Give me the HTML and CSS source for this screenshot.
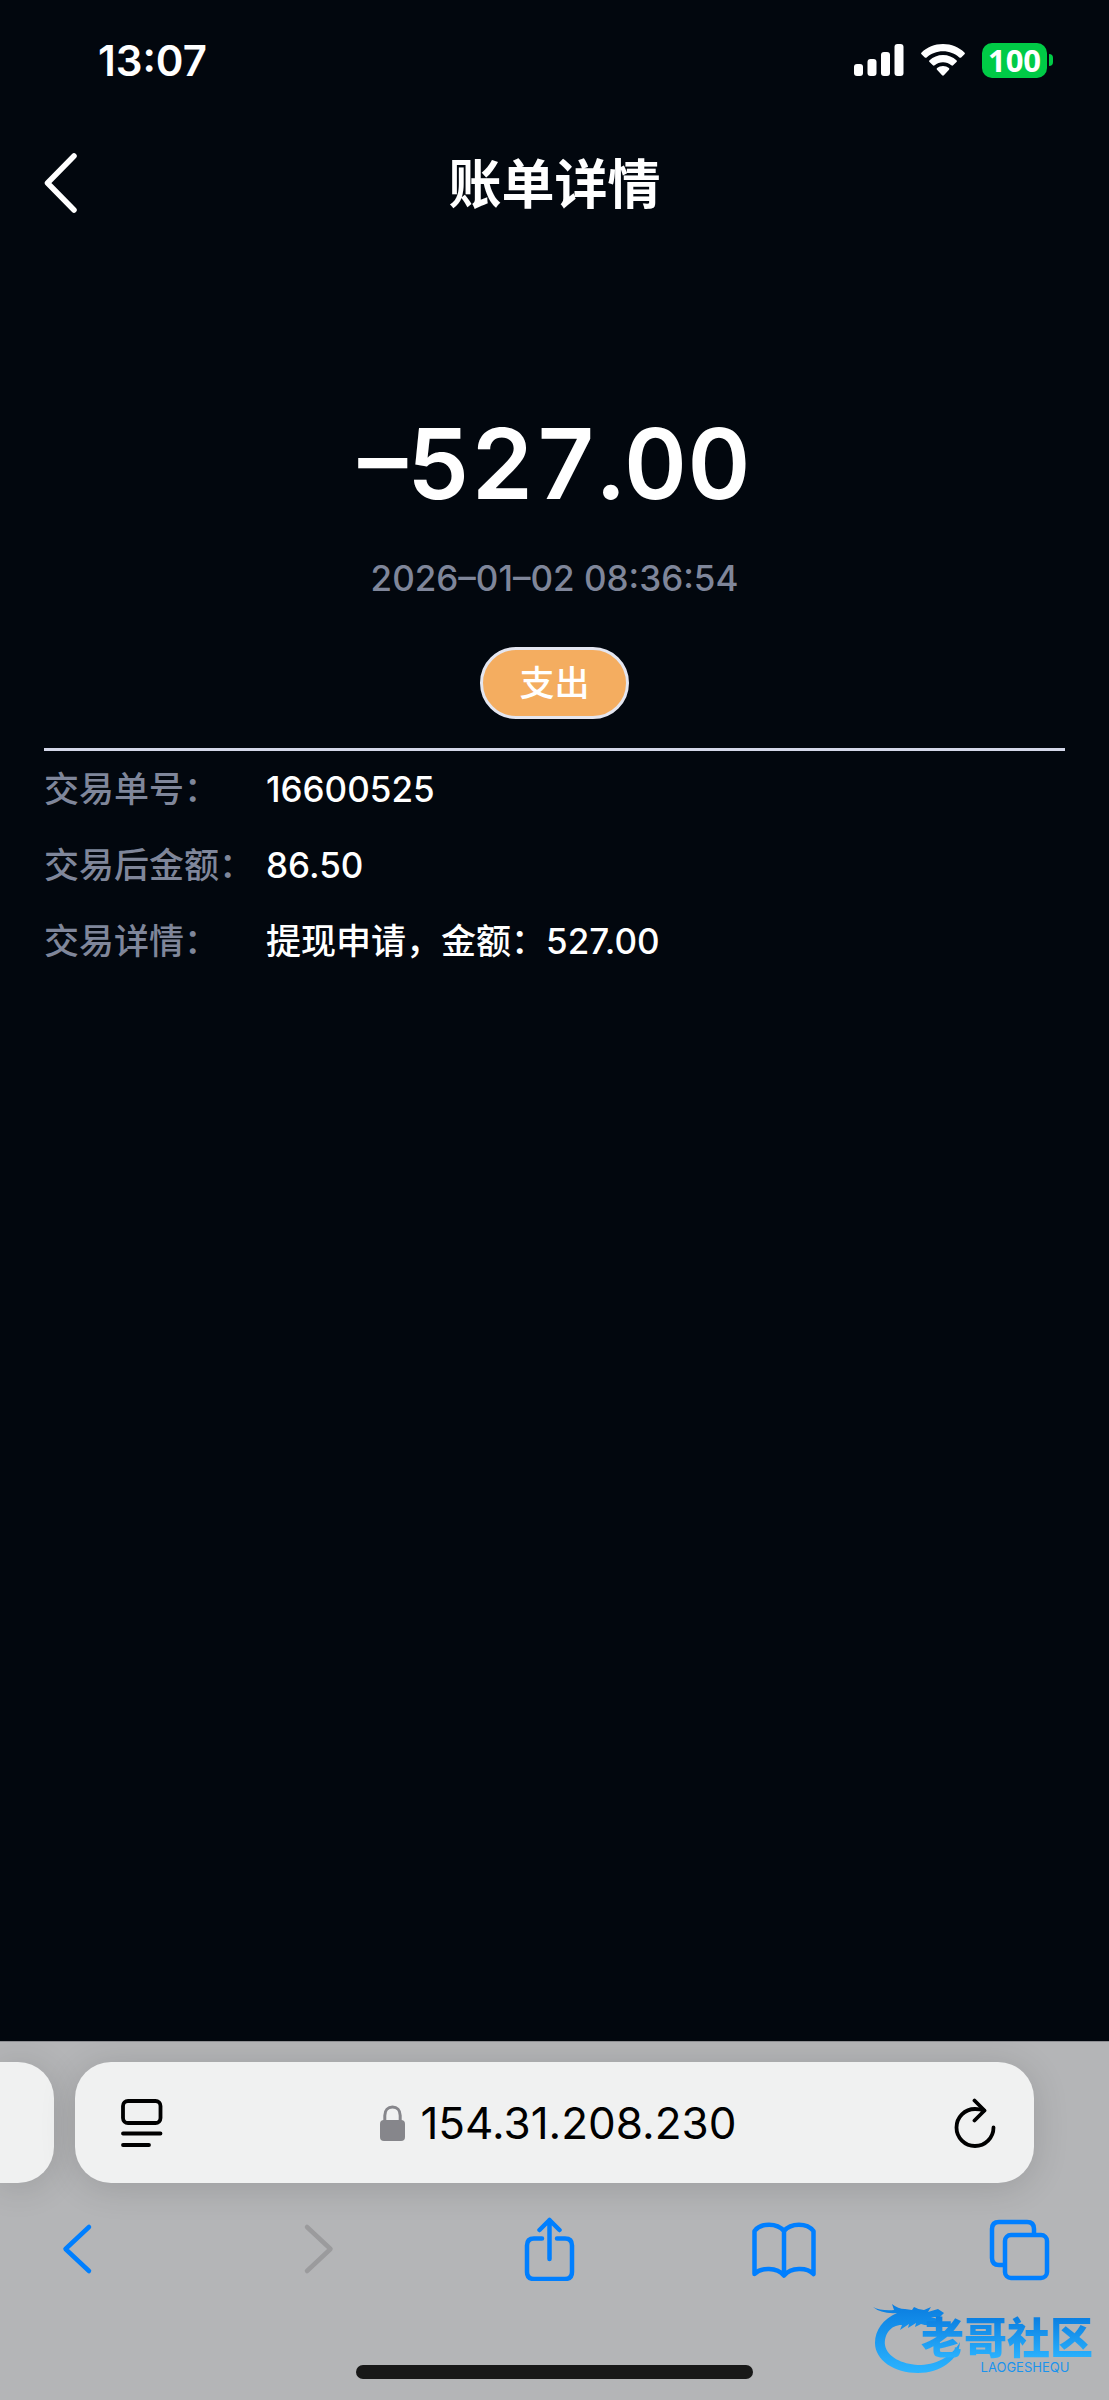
FILE: index.html
```html
<!DOCTYPE html>
<html lang="zh-CN">
<head>
    <meta charset="UTF-8">
    <meta name="viewport" content="width=device-width, initial-scale=1.0">
    <title>账单详情</title>
    <link rel="stylesheet" href="styles.css">
</head>
<body>
    <!-- Status bar -->
    <div class="status-bar">
        <span class="time">13:07</span>
        <div class="status-icons">
            <svg class="signal" width="50" height="32" viewBox="0 0 50 32" fill="#fff">
                <rect x="0" y="20" width="9" height="12" rx="3"/>
                <rect x="13.5" y="15" width="9" height="17" rx="3"/>
                <rect x="27" y="8" width="9" height="24" rx="3"/>
                <rect x="40.5" y="0" width="9" height="32" rx="3"/>
            </svg>
            <svg class="wifi" width="44" height="32" viewBox="0 0 44 32" fill="#fff">
                <path d="M22 0C13.5 0 6 3.3.6 8.4c-.7.7-.7 1.2-.1 1.8l3.3 3.2c.6.6 1.2.6 1.9 0C10 9.5 15.7 7.2 22 7.2s12 2.3 16.3 6.2c.7.6 1.3.6 1.9 0l3.3-3.2c.6-.6.6-1.1-.1-1.8C38 3.3 30.5 0 22 0z"/>
                <path d="M22 11c-5.2 0-9.900 2-13.400 5.200-.7.6-.7 1.2-.1 1.800l3.400 3.300c.6.6 1.100.5 1.800 0 2.300-1.900 5.100-3.100 8.300-3.100s6 1.200 8.300 3.100c.7.5 1.200.6 1.800 0l3.400-3.300c.6-.6.6-1.200-.1-1.800C31.900 13 27.200 11 22 11z"/>
                <path d="M22 22c-2.3 0-4.3.8-5.900 2.100-.6.5-.6 1.1-.1 1.600l5.100 5.500c.6.6 1.200.6 1.800 0l5.100-5.500c.5-.5.5-1.100-.1-1.600C26.300 22.8 24.300 22 22 22z"/>
            </svg>
            <div class="battery">
                <span class="battery-level">100</span>
                <span class="battery-cap"></span>
            </div>
        </div>
    </div>

    <!-- Page header -->
    <header class="header">
        <button type="button" class="back" aria-label="返回">
            <svg width="34" height="60" viewBox="0 0 34 60" fill="none" stroke="#fff" stroke-width="5.5" stroke-linecap="round" stroke-linejoin="round">
                <path d="M30 3L3.5 30 30 57"/>
            </svg>
        </button>
        <h1>账单详情</h1>
    </header>

    <!-- Bill -->
    <main class="bill">
        <section class="summary">
            <p class="amount">–527.00</p>
            <time class="date">2026–01–02 08:36:54</time>
            <span class="tag">支出</span>
        </section>
        <dl class="details">
            <div class="row">
                <dt>交易单号：</dt>
                <dd>16600525</dd>
            </div>
            <div class="row">
                <dt>交易后金额：</dt>
                <dd>86.50</dd>
            </div>
            <div class="row">
                <dt>交易详情：</dt>
                <dd>提现申请，金额：527.00</dd>
            </div>
        </dl>
    </main>

    <!-- Browser bar -->
    <footer class="browser">
        <div class="tabs">
            <div class="tab-prev"></div>
            <div class="address">
                <button type="button" aria-label="页面菜单">
                    <svg width="42" height="48" viewBox="0 0 42 48" fill="none" stroke="#000" stroke-width="3.8" stroke-linecap="round">
                        <rect x="2" y="2" width="37.5" height="22" rx="5"/>
                        <path d="M2 34.5h37.5M2 46h26"/>
                    </svg>
                </button>
                <label class="url">
                    <svg width="25" height="36" viewBox="0 0 25 36">
                        <path d="M4.8 17V10.5C4.8 5 8 2 12.5 2s7.7 3 7.7 8.5V17" fill="none" stroke="#86868b" stroke-width="3"/>
                        <rect x="0" y="15" width="25" height="21" rx="4" fill="#86868b"/>
                    </svg>
                    <input type="text" value="154.31.208.230" aria-label="网址">
                </label>
                <button type="button" aria-label="刷新">
                    <svg width="42" height="50" viewBox="0 0 42 50" fill="none" stroke="#000" stroke-width="3.8" stroke-linecap="round" stroke-linejoin="round">
                        <path d="M39.5 29.5A18.5 18.5 0 1 1 21 11c3.5 0 6 .3 9 1.500"/>
                        <path d="M20.5 2.5L30.5 12.5 20.5 22.5"/>
                    </svg>
                </button>
            </div>
        </div>
        <nav class="toolbar">
            <button type="button" aria-label="后退">
                <svg width="64" height="64" viewBox="0 0 64 64">
                    <path d="M44 10L20.5 32 44 54"/>
                </svg>
            </button>
            <button type="button" class="disabled" aria-label="前进" disabled>
                <svg width="64" height="64" viewBox="0 0 64 64">
                    <path d="M26 10L49.5 32 26 54"/>
                </svg>
            </button>
            <button type="button" aria-label="分享">
                <svg width="64" height="64" viewBox="0 0 64 64">
                    <path d="M26 21.5h-8q-7 0-7 7V55q0 7 7 7h31q7 0 7-7V28.5q0-7-7-7h-8"/>
                    <path d="M33.5 42V3M23.5 13L33.5 3 43.5 13"/>
                </svg>
            </button>
            <button type="button" aria-label="书签">
                <svg width="64" height="64" viewBox="0 0 64 64">
                    <path d="M32 14C25 5.5 9 5.5 2.5 14V57C9 50 25 50 32 58.5 39 50 55 50 61.5 57V14C55 5.5 39 5.5 32 14zM32 14V58"/>
                </svg>
            </button>
            <button type="button" aria-label="标签页">
                <svg width="64" height="64" viewBox="0 0 64 64">
                    <rect x="18" y="18" width="42" height="43" rx="6"/>
                    <path d="M17 48h-5q-7 0-7-7V12q0-7 7-7h28q7 0 7 7v5"/>
                </svg>
            </button>
        </nav>
        <div class="home-indicator"></div>

        <!-- Watermark -->
        <div class="watermark">
            <svg width="88" height="70" viewBox="0 0 88 70">
                <defs>
                    <linearGradient id="blue" x1="0" y1="0" x2="0" y2="1">
                        <stop offset="0" stop-color="#0a7de0"/>
                        <stop offset="1" stop-color="#2bb4ff"/>
                    </linearGradient>
                </defs>
                <path fill="url(#blue)" d="M0 3q8 4 21 3l-2-6q6 5 13 5l7 1 2-3q5 3 10 3l7-3-3 5 10-3 6 4-4 4-9 0 10 3-2 3-9-1 4 3q-8 1-13-1l-6 3 1-4-8 5 1-4-9 6 2-5C17 21 11 31 12 41c2 12 17 19 33 20 17 0 33-7 42-23C86 56 67 69 45 69 21 69 2 56 2 39 2 26 10 15 24 9Q8 10 0 3z"/>
            </svg>
            <div class="watermark-text">
                <strong>老哥社区</strong>
                <small>LAOGESHEQU</small>
            </div>
        </div>
    </footer>
</body>
</html>
```
FILE: styles.css
```css
/* Body Styling */
body {
    font-family: 'Inter', 'Noto Sans CJK SC', sans-serif;
    background: #02070e;
    color: #fff;
    margin: 0;
    min-height: 100vh;
    display: flex;
    flex-direction: column;
}

button {
    background: none;
    border: none;
    padding: 0;
    cursor: pointer;
}

svg {
    display: block;
}

/* Status Bar */
.status-bar {
    display: flex;
    justify-content: space-between;
    align-items: center;
    height: 120px;
    padding: 0 56px 0 98px;
}

.time {
    font-size: 42px;
    font-weight: 600;
}

.status-icons {
    display: flex;
    align-items: center;
    gap: 17px;
}

.battery {
    display: flex;
    align-items: center;
    gap: 2px;
}

.battery-level {
    background: #00cb46;
    border-radius: 10px;
    width: 65px;
    line-height: 35px;
    font-family: 'Open Sans', sans-serif;
    font-size: 31px;
    font-weight: 700;
    text-align: center;
}

.battery-cap {
    background: #00cb46;
    width: 4px;
    height: 12px;
    border-radius: 0 6px 6px 0;
}

/* Header */
.header {
    display: grid;
    grid-template-columns: 1fr auto 1fr;
    align-items: center;
    height: 126px;
    padding: 0 44px;
}

.back {
    justify-self: start;
}

h1 {
    margin: 0;
    padding-bottom: 4px;
    font-size: 53px;
    font-weight: 600;
}

/* Bill */
.bill {
    flex: 1;
    padding: 0 44px;
}

.summary {
    display: flex;
    flex-direction: column;
    align-items: center;
    padding: 158px 0 29px;
    border-bottom: 3px solid #d3d6e8;
}

.amount {
    margin: 0;
    font-size: 98px;
    line-height: 120px;
    font-weight: 600;
    font-variant-numeric: tabular-nums;
}

.date {
    margin-top: 32px;
    color: #7f869a;
    font-size: 35px;
    line-height: 44px;
    font-weight: 500;
}

.tag {
    margin-top: 47px;
    padding: 0 36px;
    background: #f4ad60;
    border: 3px solid #e4e6f0;
    border-radius: 36px;
    font-size: 35px;
    line-height: 66px;
    font-weight: 500;
}

.details {
    margin: 0;
}

.row {
    display: flex;
    font-size: 35px;
    line-height: 76px;
    font-weight: 500;
}

dt {
    width: 222px;
    color: #7f869a;
    white-space: nowrap;
}

dd {
    margin: 0;
}

/* Browser Bar */
.browser {
    position: relative;
    background: #b4b5b7;
    border-top: 1px solid #8d8e92;
    padding-bottom: 21px;
    overflow: hidden;
}

.tabs {
    display: flex;
    gap: 21px;
    padding: 20px 75px 0 0;
}

.tab-prev {
    width: 54px;
    border-radius: 0 36px 36px 0;
}

.tab-prev,
.address {
    background: #f0f1f1;
    box-shadow: 0 4px 36px rgba(0, 0, 0, 0.14);
}

.address {
    flex: 1;
    display: flex;
    justify-content: space-between;
    align-items: center;
    height: 121px;
    padding: 0 38px 0 46px;
    box-sizing: border-box;
    border-radius: 36px;
}

.url {
    display: flex;
    align-items: center;
    gap: 15px;
}

.url input {
    field-sizing: content;
    background: none;
    border: none;
    outline: none;
    padding: 0;
    color: #000;
    font-family: inherit;
    font-size: 44px;
}

/* Toolbar */
.toolbar {
    display: flex;
    justify-content: space-between;
    padding: 34px 58px 0 45px;
}

.toolbar svg {
    fill: none;
    stroke: #007fff;
    stroke-width: 4.5;
    stroke-linecap: round;
    stroke-linejoin: round;
}

.toolbar .disabled svg {
    stroke: #9b9b9d;
}

.home-indicator {
    width: 397px;
    height: 14px;
    margin: 84px auto 0;
    background: #181818;
    border-radius: 7px;
}

/* Watermark */
.watermark {
    position: absolute;
    right: 16px;
    bottom: 26px;
    display: flex;
    align-items: flex-end;
}

.watermark-text {
    display: flex;
    flex-direction: column;
    margin-left: -40px;
    color: #1a93ee;
}

.watermark strong {
    font-size: 43px;
    line-height: 44px;
    font-weight: 900;
    background: linear-gradient(#0a7de0, #2bb4ff);
    background-clip: text;
    color: transparent;
}

.watermark small {
    align-self: center;
    margin-left: 36px;
    font-size: 13px;
    line-height: 14px;
}
```
